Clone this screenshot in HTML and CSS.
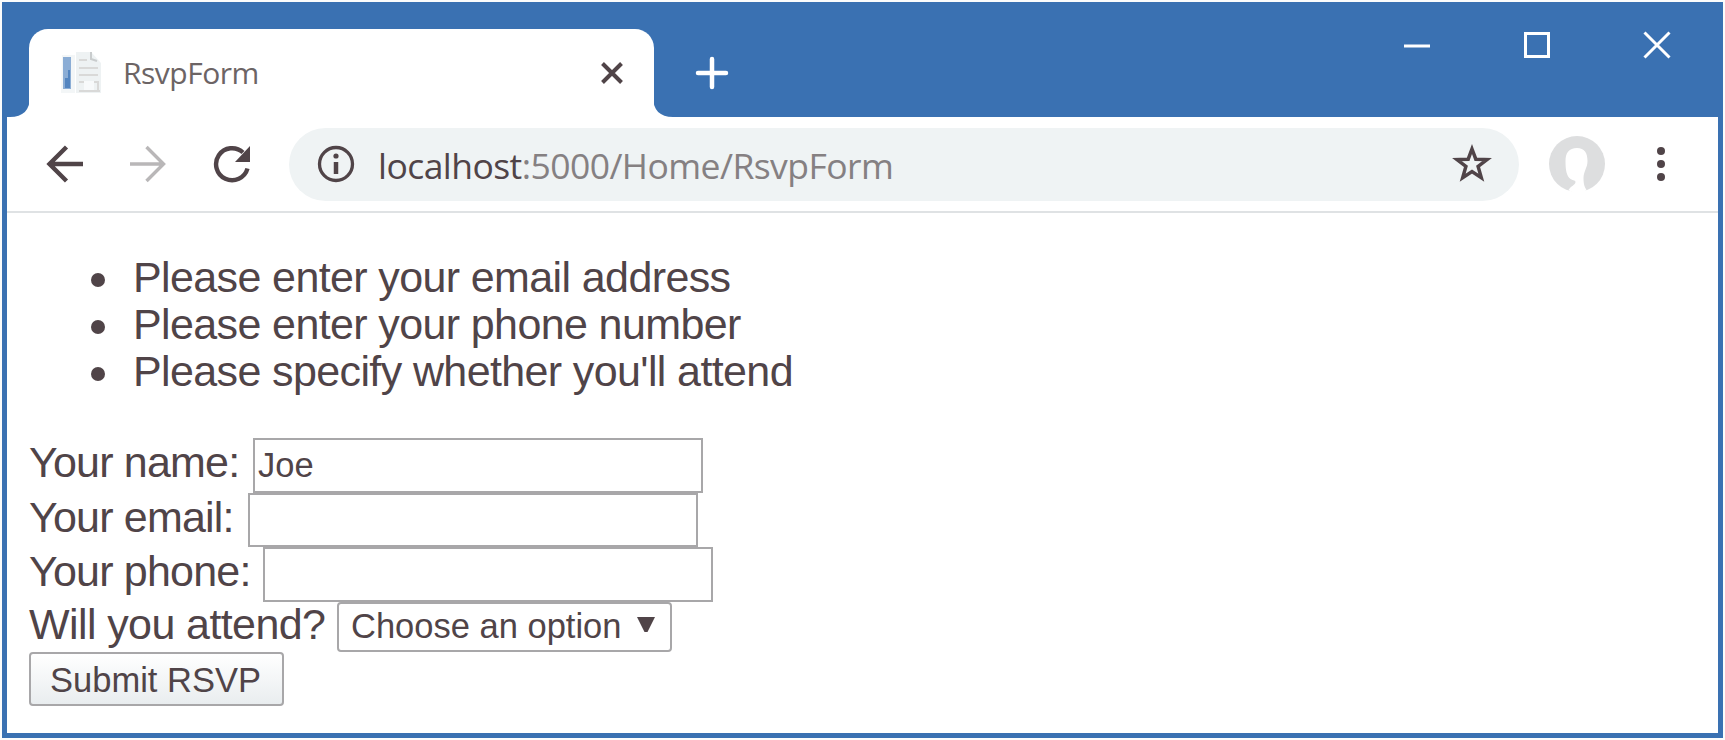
FILE: index.html
```html
<!DOCTYPE html>
<html lang="en">
<head>
<meta charset="utf-8">
<title>RsvpForm</title>
<link rel="stylesheet" href="styles.css">
</head>
<body>
<div class="window">
  <header class="titlebar">
    <svg class="flare" width="20" height="20" viewBox="0 0 20 20"><path d="M20 0v20H0C13 20 20 13 20 0Z" fill="#fff"/></svg>
    <div class="tab">
      <svg class="favicon" width="44" height="44" viewBox="0 0 44 44">
        <path d="M3 4h13v38H2z" fill="#f3f6f7"/>
        <rect x="4" y="6" width="8" height="32" fill="#8badd5"/>
        <path d="M9 19h2v18H6V27h3z" fill="#5385c0"/>
        <path d="M17 1h15l10 11v30H17z" fill="#eef2f3"/>
        <path d="M32 1v7l6 2" fill="none" stroke="#c9cccd" stroke-width="2"/>
        <path d="M20 9h8M20 17h19M20 24h19M20 31h19v8M20 40h21" fill="none" stroke="#d9d9d8" stroke-width="2"/>
        <path d="M25 30v9h10v-9z" fill="#f8fafb"/>
      </svg>
      <span class="tab-title">RsvpForm</span>
      <svg class="tab-close" width="24" height="24" viewBox="0 0 24 24"><path d="M2.500 2.500l19 19m0-19l-19 19" stroke="#504448" stroke-width="4"/></svg>
    </div>
    <svg class="flare" width="20" height="20" viewBox="0 0 20 20"><path d="M0 0v20h20C7 20 0 13 0 0Z" fill="#fff"/></svg>
    <svg class="new-tab" width="34" height="34" viewBox="0 0 34 34"><path d="M17 3v28M3 17h28" stroke="#fff" stroke-width="4.500" stroke-linecap="round"/></svg>
    <div class="controls">
      <svg width="28" height="28" viewBox="0 0 28 28"><path d="M1 15h26" stroke="#fff" stroke-width="3"/></svg>
      <svg width="28" height="28" viewBox="0 0 28 28"><path d="M2.500 2.500h23v23h-23z" fill="none" stroke="#fff" stroke-width="3"/></svg>
      <svg width="28" height="28" viewBox="0 0 28 28"><path d="M1.500 1.500l25 25m0-25l-25 25" stroke="#fff" stroke-width="3"/></svg>
    </div>
  </header>
  <nav class="toolbar">
    <svg class="back" width="40" height="40" viewBox="0 0 40 40"><path d="M38 20H5M21.500 3L4.500 20l17 17" fill="none" stroke="#504448" stroke-width="4.400"/></svg>
    <svg class="forward" width="40" height="40" viewBox="0 0 40 40"><path d="M2 20h33M18.500 3l17 17-17 17" fill="none" stroke="#b9b7b8" stroke-width="3.400"/></svg>
    <svg class="reload" width="40" height="40" viewBox="0 0 40 40"><path d="M35.500 24.500A16 16 0 1 1 31 8.500" fill="none" stroke="#504448" stroke-width="4.400"/><path d="M38 2v16H23z" fill="#504448"/></svg>
    <div class="address">
      <svg class="info" width="40" height="40" viewBox="0 0 40 40"><circle cx="20" cy="20" r="16.500" fill="none" stroke="#504448" stroke-width="3.300"/><path d="M20 18v12" stroke="#504448" stroke-width="4.500"/><circle cx="20" cy="12" r="2.600" fill="#504448"/></svg>
      <span class="url"><span class="host">localhost</span>:5000/Home/RsvpForm</span>
      <svg class="star" width="40" height="40" viewBox="0 0 40 40"><path d="M20 5l3.800 10.200 11.200.4-8.900 6.800 3.200 11.200L20 27.500l-9.300 6.100 3.200-11.200L5 15.600l11.200-.4z" fill="none" stroke="#504448" stroke-width="3.500"/></svg>
    </div>
    <svg class="avatar" width="58" height="58" viewBox="0 0 58 58"><circle cx="29" cy="29" r="28" fill="#dddedf"/><path d="M29 13c-8 0-11.500 5-11.500 13 0 9 1 15 5 18 3 2 5 1 5 3 0 3-5 4-7 8 5 4 13 4 18 0-2-3-3-6-3-12 0-7 4-10 4-17 0-8-3-13-10.500-13z" fill="#fff"/></svg>
    <svg class="menu" width="10" height="40" viewBox="0 0 10 40"><g fill="#504448"><circle cx="5" cy="7" r="4"/><circle cx="5" cy="20" r="4"/><circle cx="5" cy="33" r="4"/></g></svg>
  </nav>
  <main class="page">
    <ul class="errors">
      <li>Please enter your email address</li>
      <li>Please enter your phone number</li>
      <li>Please specify whether you'll attend</li>
    </ul>
    <form>
      <div class="row"><label class="name" for="name">Your name:</label><input id="name" value="Joe"></div>
      <div class="row"><label class="email" for="email">Your email:</label><input id="email"></div>
      <div class="row"><label class="phone" for="phone">Your phone:</label><input id="phone"></div>
      <div class="row attend"><label class="will">Will you attend?</label><div class="select"><span>Choose an option</span><svg width="18" height="16" viewBox="0 0 18 16"><path d="M0 0h18l-7.500 15h-3z" fill="#504448"/></svg></div></div>
      <button type="button"><span>Submit RSVP</span></button>
    </form>
  </main>
</div>
</body>
</html>
```
FILE: styles.css
```css
* { box-sizing: border-box; }
body { margin: 0; padding: 2px; background: #fbfcfc; }
svg { display: block; flex: none; }
.window {
  width: 1721px;
  height: 736px;
  border: 5px solid #3a71b2;
  border-top: 0;
  background: #fff;
  color: #504448;
  font-family: "Liberation Sans", Arial, sans-serif;
}
.titlebar { display: flex; align-items: flex-end; height: 115px; background: #3a71b2; }
.flare { margin: 0 -1px; }
.flare:first-child { margin-left: 3px; }
.tab {
  display: flex;
  align-items: center;
  width: 625px;
  height: 88px;
  padding: 0 30px 0 30px;
  border-radius: 19px 19px 0 0;
  background: #fff;
}
.tab-title {
  flex: 1;
  margin-left: 20px;
  font: 30px/40px "Open Sans", "Noto Sans", sans-serif;
  letter-spacing: -0.5px;
  color: #6c6465;
}
.new-tab { margin: 0 0 27px 23px; }
.controls { display: flex; gap: 92px; margin: 0 47px 58px auto; }
.toolbar {
  display: flex;
  align-items: center;
  height: 96px;
  padding-left: 38px;
  border-bottom: 2px solid #dfe2e4;
}
.forward { margin-left: 43px; }
.reload { margin-left: 44px; }
.address {
  display: flex;
  align-items: center;
  width: 1230px;
  height: 73px;
  margin-left: 37px;
  padding: 0 27px;
  border-radius: 37px;
  background: #eff3f4;
}
.url {
  flex: 1;
  margin-left: 22px;
  padding-top: 2px;
  font: 35.5px/46px "Open Sans", "Noto Sans", sans-serif;
  letter-spacing: -0.56px;
  white-space: nowrap;
  color: #858082;
}
.host { color: #504448; }
.avatar { margin-left: 29px; }
.menu { margin-left: 50px; }
.page { padding: 41px 22px 0; font-size: 43px; line-height: 47px; letter-spacing: -0.62px; }
.errors { margin: 0; padding: 0; list-style: none; }
.errors li { display: flex; align-items: center; gap: 28px; padding-left: 62px; }
.errors li::before { width: 14px; height: 14px; margin-top: 4px; border-radius: 50%; background: #504448; content: ""; }
form { padding-top: 43px; }
.row { display: flex; align-items: flex-start; height: 54.5px; white-space: nowrap; }
.row label { flex: none; padding-top: 1px; letter-spacing: -0.8px; }
.name { width: 224px; }
.email { width: 219px; }
.phone { width: 234px; }
.row .will { width: 308px; margin-top: -2px; letter-spacing: -0.6px; }
.row.attend { height: 50px; }
input {
  width: 450px;
  height: 54.5px;
  padding: 1px 3px 0;
  border: 2px solid #a8a7a9;
  border-radius: 0;
  background: #fff;
  color: #504448;
  font: 34.5px "Liberation Sans", Arial, sans-serif;
}
.select {
  display: flex;
  align-items: center;
  width: 335px;
  height: 50px;
  padding: 0 15px 0 12px;
  border: 2px solid #a8a7a9;
  border-radius: 4px;
  justify-content: space-between;
  font-size: 34.5px;
  letter-spacing: 0;
}
.select svg { margin-top: -4px; }
button {
  display: block;
  width: 255px;
  height: 54px;
  padding: 2px 2px 0 0;
  border: 2px solid #a8a7a9;
  border-radius: 4px;
  background: linear-gradient(#fff, #e9edef);
  color: #504448;
  font: 34.5px/48px "Liberation Sans", Arial, sans-serif;
}
```
